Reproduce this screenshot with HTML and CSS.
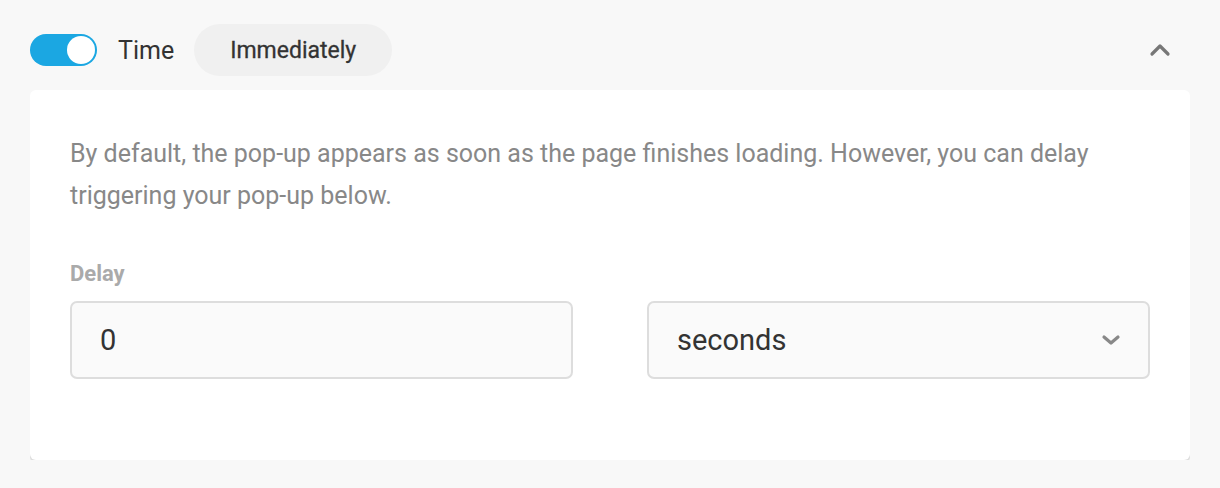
FILE: index.html
```html
<!DOCTYPE html>
<html>
<head>
    <title>Time trigger</title>
    <link rel="stylesheet" href="styles.css">
</head>
<body>
    <div class="section">
        <!-- header -->
        <div class="section-head">
            <label class="switch">
                <input type="checkbox" checked>
                <span class="slider"></span>
            </label>
            <span class="section-title">Time</span>
            <span class="pill">Immediately</span>
            <button class="collapse">
                <svg width="22" height="14" viewBox="0 0 22 14"><path d="M3 11 L11 3 L19 11" fill="none" stroke="#777" stroke-width="3.2" stroke-linecap="round" stroke-linejoin="round"/></svg>
            </button>
        </div>

        <!-- body -->
        <div class="card">
            <p class="help">By default, the pop-up appears as soon as the page finishes loading. However, you can delay triggering your pop-up below.</p>
            <div class="field-label">Delay</div>
            <div class="row">
                <input type="text" class="input" value="0">
                <div class="select">
                    <span>seconds</span>
                    <svg width="22" height="14" viewBox="0 0 22 14"><path d="M4 4 L11 10 L18 4" fill="none" stroke="#888" stroke-width="3.2" stroke-linecap="round" stroke-linejoin="round"/></svg>
                </div>
            </div>
        </div>
    </div>
</body>
</html>
```

FILE: styles.css
```css
body {
    margin: 0;
    background-color: #f8f8f8;
    font-family: Roboto, "Liberation Sans", sans-serif;
}
.section {
    padding: 24px 30px 0 30px;
}
.section-head {
    display: flex;
    align-items: center;
    height: 52px;
    margin-bottom: 14px;
}
.switch {
    position: relative;
    display: inline-block;
    width: 67px;
    height: 32px;
}
.switch input {
    display: none;
}
.slider {
    position: absolute;
    inset: 0;
    background-color: #1ba7e2;
    border-radius: 16px;
}
.slider::after {
    content: "";
    position: absolute;
    right: 2px;
    top: 2px;
    width: 28px;
    height: 28px;
    border-radius: 50%;
    background-color: white;
}
.section-title {
    margin-left: 21px;
    font-size: 25px;
    color: #333;
}
.pill {
    margin-left: 20px;
    height: 52px;
    padding: 0 36px;
    display: flex;
    align-items: center;
    border-radius: 26px;
    background-color: #f0f0f0;
    font-size: 23px;
    color: #333;
    -webkit-text-stroke: 0.3px #333;
}
.collapse {
    margin-left: auto;
    margin-right: 19px;
    border: none;
    background: none;
    padding: 0;
    display: flex;
}
.card {
    background-color: white;
    border-radius: 6px;
    box-shadow: 0 3px 0 #dedede;
    padding: 43px 40px 81px 40px;
}
.help {
    margin: 0;
    font-size: 25px;
    line-height: 42px;
    color: #888;
}
.field-label {
    margin-top: 44px;
    font-size: 22px;
    font-weight: 700;
    color: #aaa;
}
.row {
    display: grid;
    grid-template-columns: 1fr 1fr;
    gap: 74px;
    margin-top: 15px;
}
.input, .select {
    box-sizing: border-box;
    height: 78px;
    border: 2px solid #ddd;
    border-radius: 7px;
    background-color: #fafafa;
    font-family: Roboto, "Liberation Sans", sans-serif;
    font-size: 29px;
    color: #333;
    padding: 0 28px;
}
.input {
    width: 100%;
    outline: none;
}
.select {
    display: flex;
    align-items: center;
    justify-content: space-between;
    padding-right: 26px;
}
```
